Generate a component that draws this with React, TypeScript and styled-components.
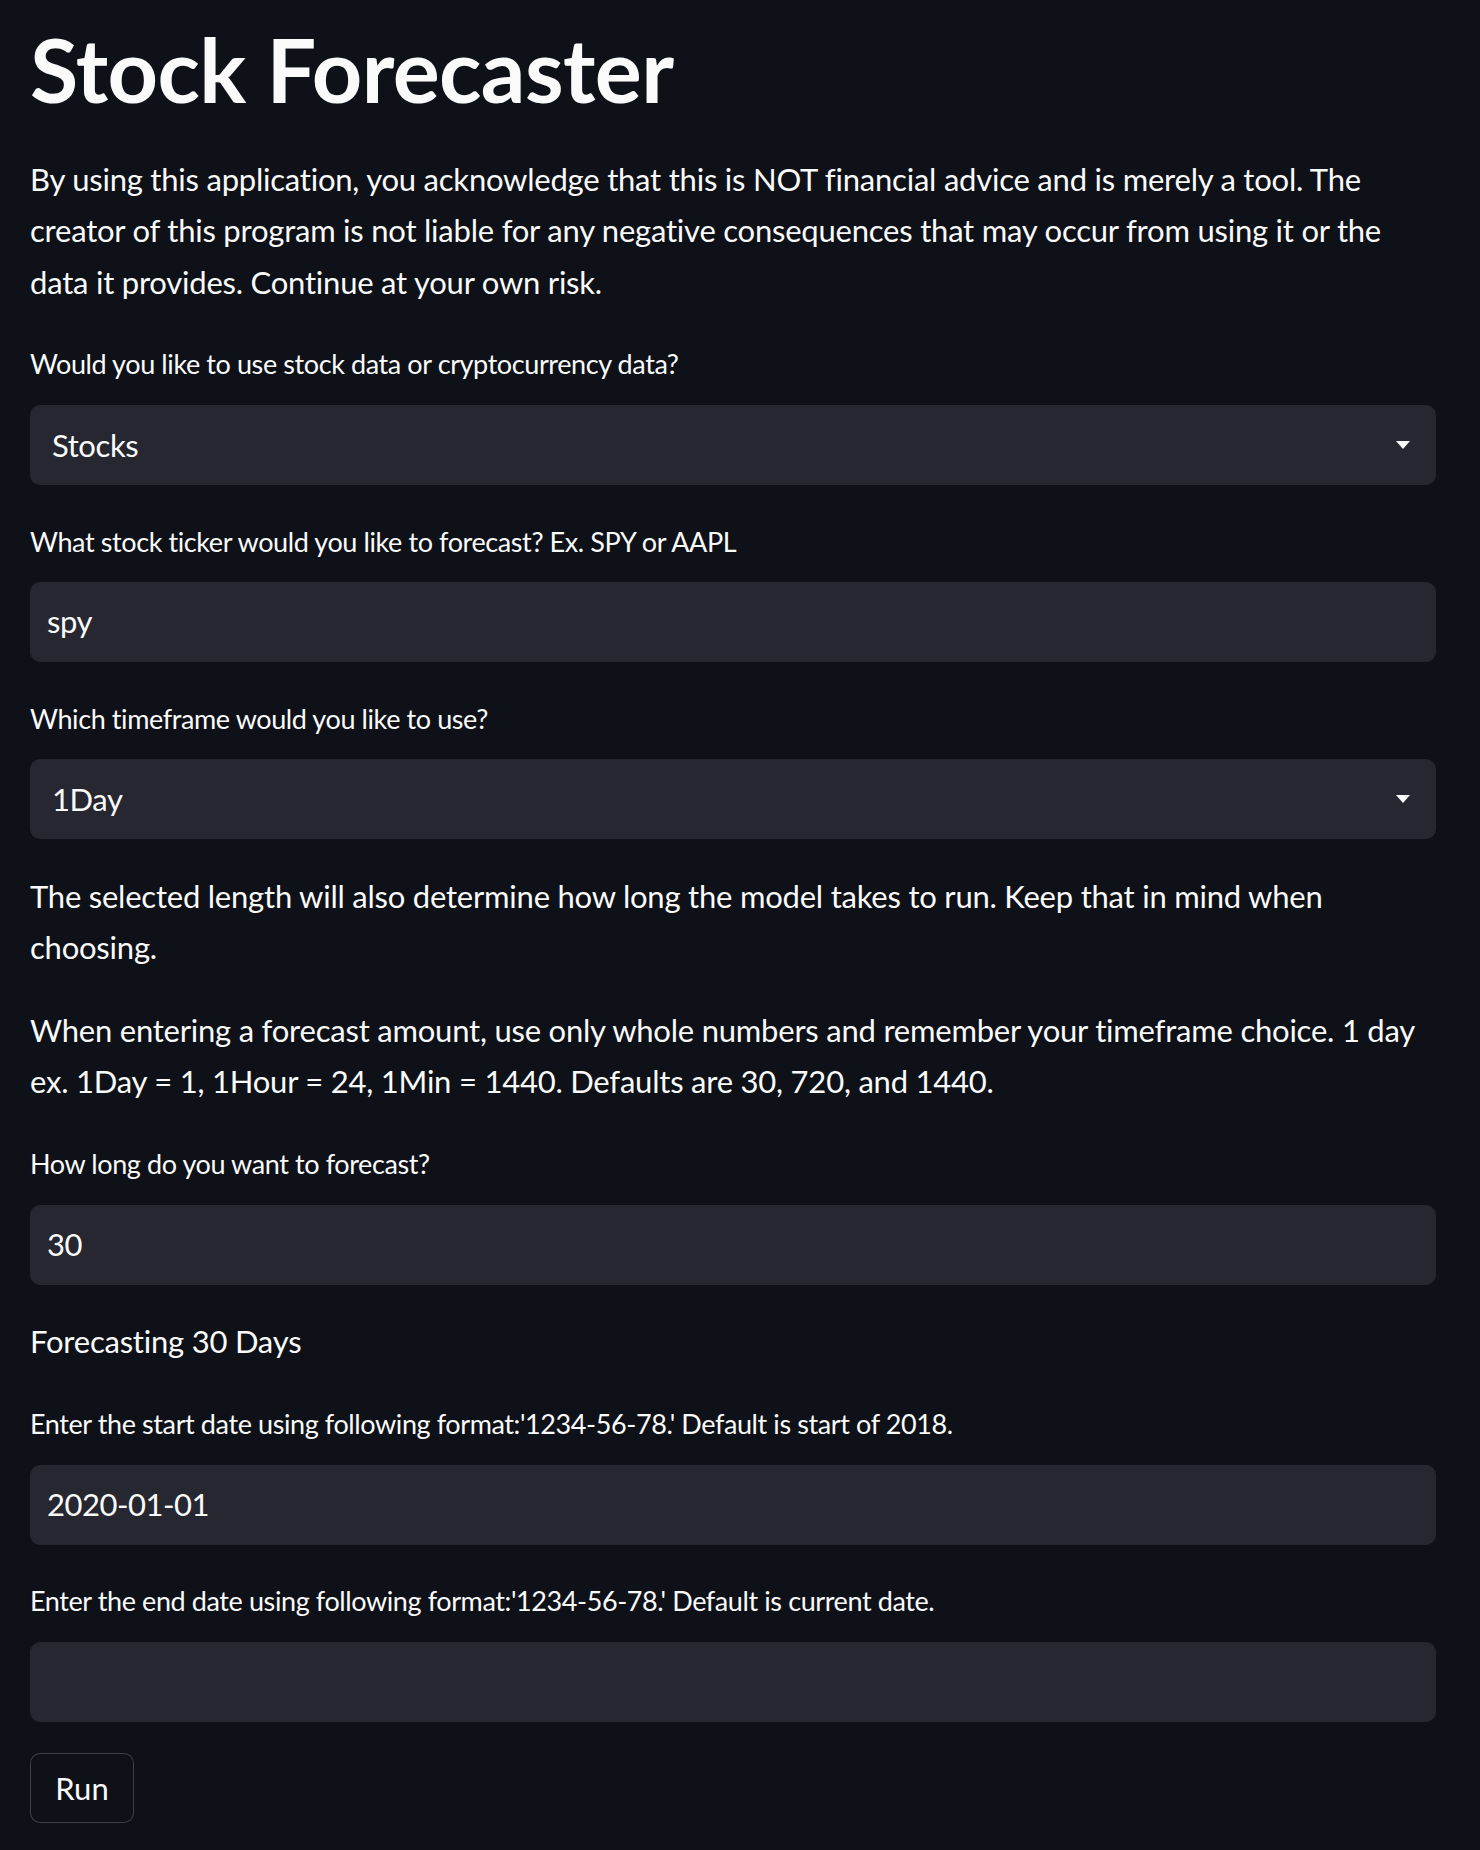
import React from "react";
import styled, { createGlobalStyle } from "styled-components";

const GlobalStyle = createGlobalStyle`
  html, body {
    margin: 0;
    padding: 0;
    background: #0e1117;
  }
  body {
    font-family: Lato, "Noto Sans", sans-serif;
    color: #fafafa;
    -webkit-font-smoothing: antialiased;
  }
`;

const Page = styled.main`
  min-height: 1850px;
  box-sizing: border-box;
  padding: 17px 44px 40px 30px;
  background: #0e1117;
  display: flex;
  flex-direction: column;
  gap: 31.6px;
`;

const Title = styled.h1`
  margin: 0;
  font-size: 88px;
  line-height: 105.6px;
  font-weight: 700;
  letter-spacing: -0.6px;
  color: #fafafa;
`;

const Paragraph = styled.p`
  margin: 0;
  font-size: 31px;
  line-height: 51.2px;
  font-weight: 400;
  letter-spacing: -0.22px;
  color: #fafafa;
`;

const Field = styled.div`
  display: flex;
  flex-direction: column;
`;

const Label = styled.label`
  font-size: 27px;
  line-height: 44.8px;
  padding-top: 3px;
  margin-bottom: 17.8px;
  letter-spacing: -0.4px;
  color: #fafafa;
`;

const TextInput = styled.input`
  box-sizing: border-box;
  width: 100%;
  height: 80px;
  border: 1px solid #262730;
  border-radius: 10px;
  background: #262730;
  color: #fafafa;
  font-family: Lato, "Noto Sans", sans-serif;
  font-size: 31px;
  letter-spacing: -0.5px;
  padding: 0 16px 2px;
  outline: none;
`;

const SelectBox = styled.div`
  box-sizing: border-box;
  height: 80px;
  border-radius: 10px;
  background: #262730;
  display: flex;
  align-items: center;
  justify-content: space-between;
  padding: 0 26px 0 22px;
  font-size: 31px;
  letter-spacing: -0.4px;
  color: #fafafa;
`;

const Caret = styled.svg`
  width: 14px;
  height: 8px;
  flex: none;
`;

const RunButton = styled.button`
  align-self: flex-start;
  box-sizing: border-box;
  width: 104px;
  height: 70px;
  border: 1.5px solid rgba(250, 250, 250, 0.2);
  border-radius: 10px;
  background: #0e1117;
  color: #fafafa;
  font-family: Lato, "Noto Sans", sans-serif;
  font-size: 31px;
  cursor: pointer;
`;

const Select = ({ value }: { value: string }) => (
  <SelectBox>
    <span>{value}</span>
    <Caret viewBox="0 0 14 8">
      <path d="M0 0 L14 0 L7 8 Z" fill="#fafafa" />
    </Caret>
  </SelectBox>
);

export default function App() {
  return (
    <>
      <GlobalStyle />
      <Page>
        <Title>Stock Forecaster</Title>
        <Paragraph>
          By using this application, you acknowledge that this is NOT financial advice and is merely a
          tool. The creator of this program is not liable for any negative consequences that may occur
          from using it or the data it provides. Continue at your own risk.
        </Paragraph>
        <Field>
          <Label>Would you like to use stock data or cryptocurrency data?</Label>
          <Select value="Stocks" />
        </Field>
        <Field>
          <Label>What stock ticker would you like to forecast? Ex. SPY or AAPL</Label>
          <TextInput defaultValue="spy" />
        </Field>
        <Field>
          <Label>Which timeframe would you like to use?</Label>
          <Select value="1Day" />
        </Field>
        <Paragraph>
          The selected length will also determine how long the model takes to run. Keep that in mind
          when choosing.
        </Paragraph>
        <Paragraph>
          When entering a forecast amount, use only whole numbers and remember your timeframe choice. 1
          day ex. 1Day = 1, 1Hour = 24, 1Min = 1440. Defaults are 30, 720, and 1440.
        </Paragraph>
        <Field>
          <Label>How long do you want to forecast?</Label>
          <TextInput defaultValue="30" />
        </Field>
        <Paragraph>Forecasting 30 Days</Paragraph>
        <Field>
          <Label>Enter the start date using following format:'1234-56-78.' Default is start of 2018.</Label>
          <TextInput defaultValue="2020-01-01" />
        </Field>
        <Field>
          <Label>Enter the end date using following format:'1234-56-78.' Default is current date.</Label>
          <TextInput defaultValue="" />
        </Field>
        <RunButton>Run</RunButton>
      </Page>
    </>
  );
}
